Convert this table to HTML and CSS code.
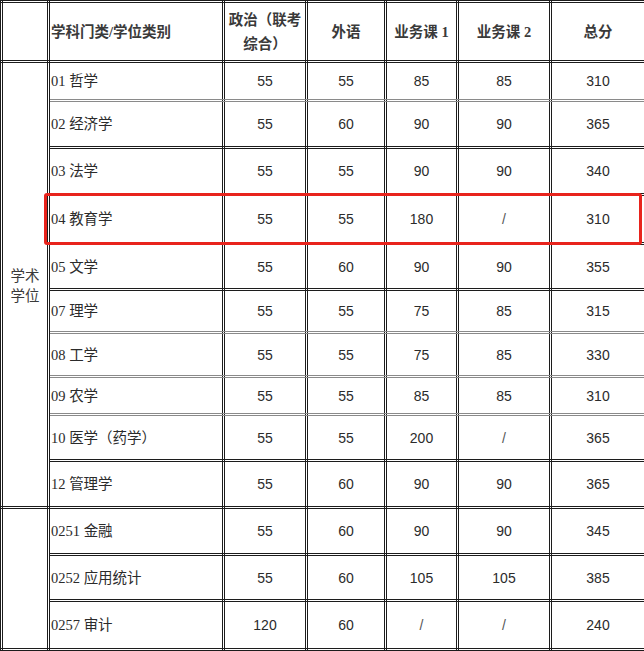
FILE: index.html
```html
<!DOCTYPE html>
<html lang="zh-CN">
<head>
<meta charset="utf-8">
<title>分数线</title>
<link rel="stylesheet" href="styles.css">
</head>
<body>
<div class="wrap">
<table class="score">
  <colgroup>
    <col class="c0"><col class="c1"><col class="c2"><col class="c3"><col class="c4"><col class="c5"><col class="c6">
  </colgroup>
  <tr class="h0">
    <td class="grp"></td>
    <td class="hd lab">学科门类/学位类别</td>
    <td class="hd two">政治（联考<br>综合）</td>
    <td class="hd">外语</td>
    <td class="hd">业务课 <span class="dg">1</span></td>
    <td class="hd">业务课 <span class="dg">2</span></td>
    <td class="hd tot">总分</td>
  </tr>
  <tr class="r39 grey">
    <td class="grp" rowspan="10"><span class="gtxt">学术<br>学位</span></td>
    <td class="lab"><span class="dg">01</span> 哲学</td>
    <td class="n">55</td><td class="n">55</td><td class="n">85</td><td class="n">85</td><td class="n tot">310</td>
  </tr>
  <tr class="r47">
    <td class="lab"><span class="dg">02</span> 经济学</td>
    <td class="n">55</td><td class="n">60</td><td class="n">90</td><td class="n">90</td><td class="n tot">365</td>
  </tr>
  <tr class="r47">
    <td class="lab"><span class="dg">03</span> 法学</td>
    <td class="n">55</td><td class="n">55</td><td class="n">90</td><td class="n">90</td><td class="n tot">340</td>
  </tr>
  <tr class="r49">
    <td class="lab"><span class="dg">04</span> 教育学</td>
    <td class="n">55</td><td class="n">55</td><td class="n">180</td><td class="n sl">/</td><td class="n tot">310</td>
  </tr>
  <tr class="r46">
    <td class="lab"><span class="dg">05</span> 文学</td>
    <td class="n">55</td><td class="n">60</td><td class="n">90</td><td class="n">90</td><td class="n tot">355</td>
  </tr>
  <tr class="r43 grey">
    <td class="lab"><span class="dg">07</span> 理学</td>
    <td class="n">55</td><td class="n">55</td><td class="n">75</td><td class="n">85</td><td class="n tot">315</td>
  </tr>
  <tr class="r44 grey">
    <td class="lab"><span class="dg">08</span> 工学</td>
    <td class="n">55</td><td class="n">55</td><td class="n">75</td><td class="n">85</td><td class="n tot">330</td>
  </tr>
  <tr class="r38 grey">
    <td class="lab"><span class="dg">09</span> 农学</td>
    <td class="n">55</td><td class="n">55</td><td class="n">85</td><td class="n">85</td><td class="n tot">310</td>
  </tr>
  <tr class="r46">
    <td class="lab"><span class="dg">10</span> 医学（药学）</td>
    <td class="n">55</td><td class="n">55</td><td class="n">200</td><td class="n sl">/</td><td class="n tot">365</td>
  </tr>
  <tr class="r47">
    <td class="lab"><span class="dg">12</span> 管理学</td>
    <td class="n">55</td><td class="n">60</td><td class="n">90</td><td class="n">90</td><td class="n tot">365</td>
  </tr>
  <tr class="r47">
    <td class="grp" rowspan="3"></td>
    <td class="lab"><span class="dg">0251</span> 金融</td>
    <td class="n">55</td><td class="n">60</td><td class="n">90</td><td class="n">90</td><td class="n tot">345</td>
  </tr>
  <tr class="r46">
    <td class="lab"><span class="dg">0252</span> 应用统计</td>
    <td class="n">55</td><td class="n">60</td><td class="n">105</td><td class="n">105</td><td class="n tot">385</td>
  </tr>
  <tr class="r49">
    <td class="lab"><span class="dg">0257</span> 审计</td>
    <td class="n">120</td><td class="n">60</td><td class="n sl">/</td><td class="n sl">/</td><td class="n tot">240</td>
  </tr>
</table>
<div class="mark"></div>
</div>
</body>
</html>
```
FILE: styles.css
```css
html, body {
  margin: 0;
  padding: 0;
  background: #ffffff;
}
.wrap {
  position: relative;
  width: 644px;
  height: 651px;
  overflow: hidden;
}
.score {
  border-collapse: collapse;
  table-layout: fixed;
  width: 644px;
  color: #2b2b2b;
  font-family: "Liberation Serif", "Noto Sans CJK SC", serif;
  font-size: 14.5px;
}
.c0 { width: 47px; }
.c1 { width: 175px; }
.c2 { width: 83px; }
.c3 { width: 79px; }
.c4 { width: 72px; }
.c5 { width: 93px; }
.c6 { width: 95px; }
.score td {
  border: 3px double #1c1c1c;
  padding: 0;
  vertical-align: middle;
  text-align: center;
  line-height: 20px;
}
.score td.tot { border-left-color: #8a8a8a; }
.h0 { height: 60px; }
.r38 { height: 38px; }
.r39 { height: 39px; }
.r43 { height: 43px; }
.r44 { height: 44px; }
.r46 { height: 46px; }
.r47 { height: 47px; }
.r49 { height: 49px; }
.grey td { border-bottom-color: #8a8a8a; }
.grey td.grp { border-bottom-color: #1c1c1c; }
.hd {
  font-family: "Liberation Serif", "Noto Sans CJK SC", serif;
  font-weight: bold;
  color: #3a3a3a;
  font-size: 14.5px;
}
.hd.two { line-height: 24px; }
.score td.lab {
  text-align: left;
  padding-left: 1px;
}
.score td.n {
  font-family: "Liberation Sans", "Noto Sans CJK SC", sans-serif;
  font-size: 14px;
}
.score td.sl { color: #555; }
.grp {
  color: #3a3a3a;
  font-family: "Noto Sans CJK SC", sans-serif;
  font-size: 14.5px;
}
.gtxt {
  display: inline-block;
  line-height: 20px;
}
.dg { font-family: "Liberation Serif", serif; }
.mark {
  position: absolute;
  left: 44px;
  top: 193px;
  width: 592px;
  height: 46px;
  border: 3px solid #e8231c;
  border-radius: 3px;
}
```
